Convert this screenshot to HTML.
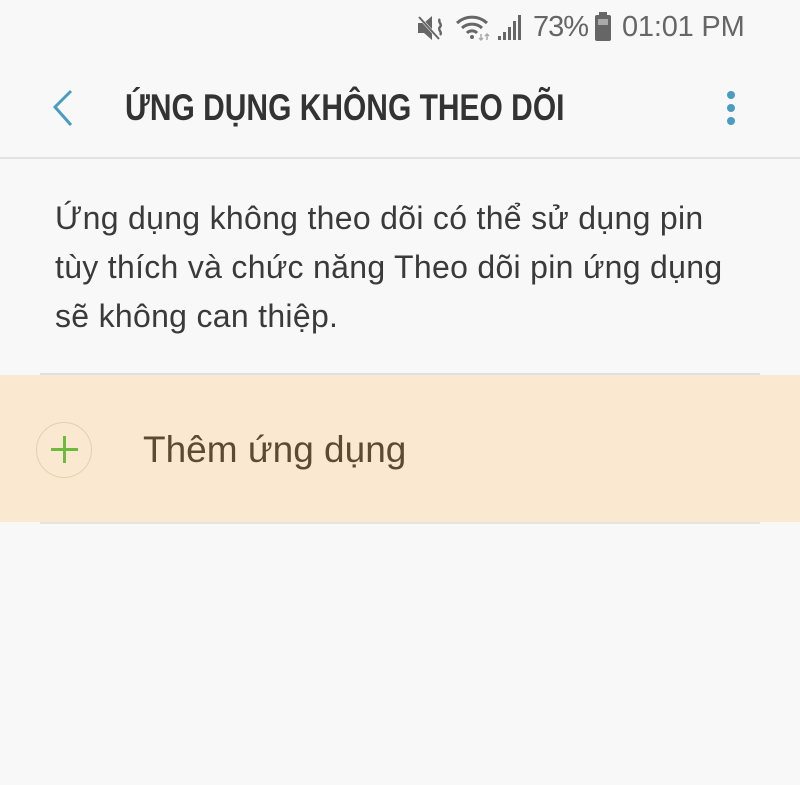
<!DOCTYPE html>
<html><head><meta charset="utf-8"><style>
body{margin:0;width:800px;height:785px;background:#f8f8f8;font-family:"Liberation Sans",sans-serif;position:relative;overflow:hidden}
.abs{position:absolute}
</style></head><body>
<div class="abs" style="left:416px;top:13px;width:30px;height:30px">
<svg width="30" height="30" viewBox="0 0 30 30"><path d="M2 10h6l8-7v24l-8-7H2z" fill="#666"/><path d="M3 4l20 22" stroke="#f8f8f8" stroke-width="3"/><path d="M3 4l20 22" stroke="#666" stroke-width="2"/><path d="M24 6c-3 3 3 5 0 8s3 5 0 8" stroke="#666" stroke-width="2.5" fill="none"/></svg></div>
<svg class="abs" style="left:455px;top:12px" width="70" height="30" viewBox="0 0 70 30"><path d="M2 11a22 22 0 0 1 30 0" stroke="#666" stroke-width="3" fill="none"/><path d="M7 16a15 15 0 0 1 20 0" stroke="#666" stroke-width="3" fill="none"/><path d="M12 21a7 7 0 0 1 10 0" stroke="#666" stroke-width="3" fill="none"/><circle cx="17" cy="25" r="2" fill="#666"/><path d="M26 22v6M24 26l2 2 2-2M32 28v-6M30 24l2-2 2 2" stroke="#aaa" stroke-width="1.5" fill="none"/><rect x="43" y="24" width="3" height="4" fill="#666"/><rect x="48" y="20" width="3" height="8" fill="#666"/><rect x="53" y="15" width="3" height="13" fill="#666"/><rect x="58" y="9" width="3" height="19" fill="#666"/><rect x="63" y="3" width="3" height="25" fill="#666"/></svg>
<div class="abs" style="left:533px;top:11px;font-size:29px;color:#666;letter-spacing:-1px">73%</div>
<svg class="abs" style="left:594px;top:12px" width="20" height="30"><rect x="5" y="0" width="8" height="4" fill="#666"/><rect x="1" y="3" width="16" height="26" rx="2" fill="#666"/><rect x="4" y="7" width="10" height="6" fill="#aaa"/></svg>
<div class="abs" style="left:622px;top:11px;font-size:29px;color:#666;letter-spacing:-0.2px">01:01 PM</div>
<svg class="abs" style="left:45px;top:88px" width="30" height="40"><path d="M26 3L10 19l16 18" stroke="#4a9cc2" stroke-width="3" fill="none"/></svg>
<div class="abs" style="left:125px;top:87px;font-size:37px;font-weight:bold;color:#333;white-space:nowrap;transform:scaleX(0.81);transform-origin:left top">ỨNG DỤNG KHÔNG THEO DÕI</div>
<div class="abs" style="left:727px;top:91px;width:8px;height:8px;border-radius:50%;background:#4a9cc2"></div>
<div class="abs" style="left:727px;top:104px;width:8px;height:8px;border-radius:50%;background:#4a9cc2"></div>
<div class="abs" style="left:727px;top:117px;width:8px;height:8px;border-radius:50%;background:#4a9cc2"></div>
<div class="abs" style="left:0;top:157px;width:800px;height:2px;background:#e2e2e2"></div>
<div class="abs" style="left:55px;top:194px;font-size:32px;letter-spacing:0.3px;line-height:49px;color:#3a3a3a;width:740px;white-space:nowrap">Ứng dụng không theo dõi có thể sử dụng pin<br>tùy thích và chức năng Theo dõi pin ứng dụng<br>sẽ không can thiệp.</div>
<div class="abs" style="left:40px;top:373px;width:720px;height:2px;background:#e0e0e0"></div>
<div class="abs" style="left:0;top:375px;width:800px;height:147px;background:#fae8d0"></div>
<div class="abs" style="left:40px;top:522px;width:720px;height:2px;background:#e4e4e4"></div>
<div class="abs" style="left:36px;top:422px;width:56px;height:56px;border-radius:50%;border:1px solid #e3cfb2;box-sizing:border-box"></div>
<div class="abs" style="left:51px;top:448px;width:27px;height:3px;background:#6cbb3c"></div>
<div class="abs" style="left:63px;top:436px;width:3px;height:27px;background:#6cbb3c"></div>
<div class="abs" style="left:143px;top:429px;font-size:37px;color:#5c4a32">Thêm ứng dụng</div>
</body></html>
